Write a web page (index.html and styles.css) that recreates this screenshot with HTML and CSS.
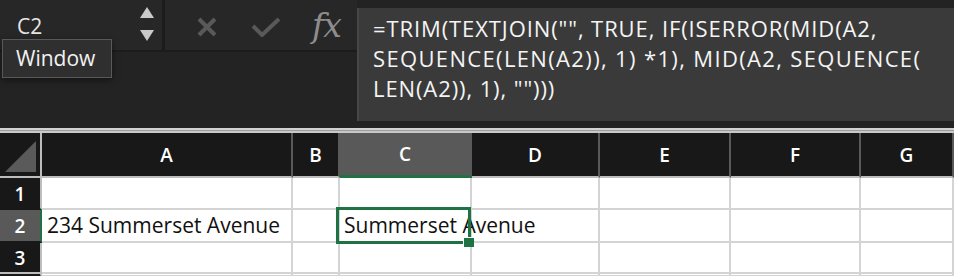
FILE: index.html
```html
<!DOCTYPE html>
<html>
<head>
<meta charset="utf-8">
<link rel="stylesheet" href="styles.css">
</head>
<body>
<div class="excel">
  <div class="fbar">
    <div class="fbar-left">
      <div class="fbar-top">
        <div class="namebox">
          <span class="ref">C2</span>
          <div class="spin">
            <svg width="14" height="12" viewBox="0 0 14 12"><polygon points="7,0 14,11 0,11" fill="#c9c9c9"/></svg>
            <svg width="14" height="12" viewBox="0 0 14 12"><polygon points="0,0 14,0 7,11" fill="#c9c9c9"/></svg>
          </div>
        </div>
        <div class="actions">
          <svg class="icon-x" width="22" height="20" viewBox="0 0 22 20"><path d="M3 2 L19 18 M19 2 L3 18" stroke="#595959" stroke-width="4" fill="none"/></svg>
          <svg class="icon-check" width="30" height="20" viewBox="0 0 30 20"><path d="M2 9 L11 18 L28 2" stroke="#595959" stroke-width="4" fill="none"/></svg>
          <span class="fx">fx</span>
        </div>
      </div>
      <div class="tooltip">Window</div>
    </div>
    <div class="formula">
      <div class="fline">=TRIM(TEXTJOIN("", TRUE, IF(ISERROR(MID(A2,</div>
      <div class="fline l2">SEQUENCE(LEN(A2)), 1) *1), MID(A2, SEQUENCE(</div>
      <div class="fline">LEN(A2)), 1), "")))</div>
    </div>
  </div>
  <div class="sep"></div>
  <div class="sheet">
    <div class="hd corner"><svg width="31" height="31" viewBox="0 0 31 31"><polygon points="0,31 31,0 31,31" fill="#5a5a5a"/></svg></div>
    <div class="hd col">A</div>
    <div class="hd col">B</div>
    <div class="hd col sel">C</div>
    <div class="hd col">D</div>
    <div class="hd col">E</div>
    <div class="hd col">F</div>
    <div class="hd col">G</div>

    <div class="hd row">1</div>
    <div class="c"></div><div class="c"></div><div class="c"></div><div class="c"></div><div class="c"></div><div class="c"></div><div class="c"></div>

    <div class="hd row rsel">2</div>
    <div class="c">234 Summerset Avenue</div>
    <div class="c"></div>
    <div class="c active">Summerset Avenue<span class="selbox"></span><span class="handle"></span></div>
    <div class="c"></div><div class="c"></div><div class="c"></div><div class="c"></div>

    <div class="hd row last">3</div>
    <div class="c"></div><div class="c"></div><div class="c"></div><div class="c"></div><div class="c"></div><div class="c"></div><div class="c"></div>

    <div class="hd row tail"></div>
    <div class="c"></div><div class="c"></div><div class="c"></div><div class="c"></div><div class="c"></div><div class="c"></div><div class="c"></div>
  </div>
</div>
</body>
</html>
```

FILE: styles.css
```css
html, body {
  margin: 0;
  padding: 0;
  background: #ffffff;
}
.excel {
  width: 954px;
  height: 276px;
  overflow: hidden;
  font-family: "Open Sans", "Noto Sans", sans-serif;
}
.fbar {
  display: flex;
  height: 128px;
  background: #232323;
}
.fbar-left {
  position: relative;
  width: 357px;
  flex: none;
}
.fbar-top {
  display: flex;
  height: 50px;
  background: #272727;
  border-bottom: 2px solid #1c1c1c;
}
.namebox {
  width: 165px;
  display: flex;
  align-items: center;
  justify-content: space-between;
  padding: 0 8px 0 17px;
  box-sizing: border-box;
  border-right: 3px solid #1c1c1c;
}
.ref {
  color: #e6e6e6;
  font-size: 21px;
  margin-top: 2px;
}
.spin {
  display: flex;
  flex-direction: column;
  gap: 11px;
  margin-top: -2px;
}
.spin svg { display: block; }
.actions {
  flex: 1;
  display: flex;
  align-items: center;
  padding-left: 31px;
}
.icon-x { margin-top: 4px; }
.icon-check { margin-left: 33px; margin-top: 4px; }
.fx {
  margin-left: 31px;
  font-family: "DejaVu Serif", "Liberation Serif", serif;
  font-style: italic;
  font-size: 33px;
  letter-spacing: -1px;
  color: #8d8d8d;
  margin-top: 0px;
}
.tooltip {
  position: absolute;
  left: 2px;
  top: 39px;
  width: 110px;
  height: 39px;
  box-sizing: border-box;
  background: #2f2f2f;
  border: 1px solid #595959;
  box-shadow: 0 2px 6px rgba(0,0,0,0.5);
  color: #f2f2f2;
  font-size: 21px;
  padding-left: 13px;
  line-height: 36px;
}
.formula {
  flex: 1;
  margin-top: 8px;
  height: 113px;
  background: #3a3a3a;
  border-left: 2px solid #474747;
  padding: 5px 0 0 14px;
  box-sizing: border-box;
  color: #f4f4f4;
  font-size: 22px;
  letter-spacing: 0.9px;
  line-height: 30px;
}
.fline { white-space: nowrap; }
.fline.l2 { letter-spacing: 1.35px; }
.sep {
  height: 5px;
  background: linear-gradient(#d2d2d2 0, #d2d2d2 2px, #9c9c9c 2px, #9c9c9c 3px, #c9c9c9 3px);
}
.sheet {
  display: grid;
  grid-template-columns: 42px 251px 47px 132px 128px 131px 130px 1fr;
  grid-template-rows: 45px 32px 33px 31px 1fr;
  height: 143px;
  background: #fff;
}
.sheet > div {
  box-sizing: border-box;
  border-right: 2px solid #d4d4d4;
  border-bottom: 2px solid #d4d4d4;
}
.sheet > .hd {
  background: #181818;
  color: #ffffff;
  font-size: 19px;
  font-weight: 600;
  display: flex;
  align-items: center;
  justify-content: center;
}
.sheet > .col {
  border-right-color: #595959;
  border-bottom-color: #bdbdbd;
}
.sheet > .corner {
  border-right-color: #bdbdbd;
  border-bottom-color: #bdbdbd;
  align-items: flex-end;
  justify-content: flex-end;
  padding: 0 4px 4px 0;
}
.corner svg { display: block; }
.sheet > .col.sel {
  background: #595959;
  border-bottom: 3px solid #1f7244;
}
.sheet > .row {
  border-right-color: #bdbdbd;
  border-bottom-color: #181818;
  padding-top: 1px;
}
.sheet > .row.rsel {
  background: #595959;
  border-right-color: #1f7244;
}
.sheet > .row.last { border-bottom-color: #bdbdbd; }
.sheet > .c {
  font-size: 21px;
  color: #111;
  padding-left: 5px;
  line-height: 31px;
  white-space: nowrap;
}
.sheet > .c.active {
  position: relative;
  padding-left: 4px;
  z-index: 1;
}
.selbox {
  position: absolute;
  left: -4px;
  top: -3px;
  width: 135px;
  height: 37px;
  box-sizing: border-box;
  border: 3px solid #1f7244;
}
.handle {
  position: absolute;
  left: 123px;
  top: 27px;
  width: 10px;
  height: 9px;
  background: #1f7244;
  border-left: 1px solid #fff;
  border-top: 1px solid #fff;
}
```
